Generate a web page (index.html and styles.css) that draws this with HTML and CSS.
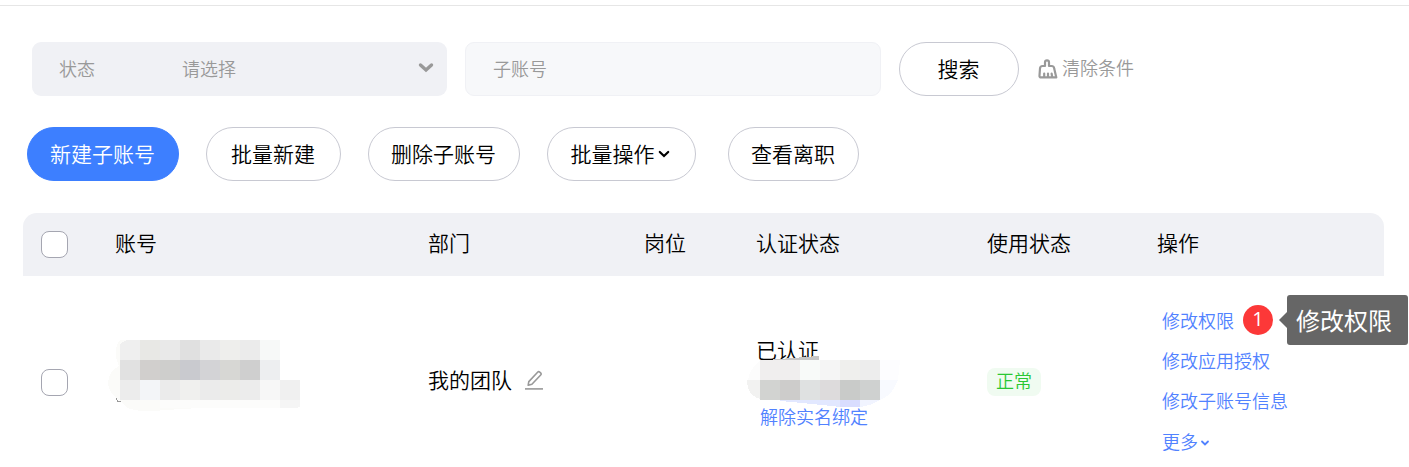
FILE: index.html
```html
<!DOCTYPE html>
<html lang="zh-CN">
<head>
    <meta charset="UTF-8">
    <meta name="viewport" content="width=device-width, initial-scale=1.0">
    <title>子账号</title>
    <link rel="stylesheet" href="styles.css">
</head>
<body>
    <div class="page">
        <div class="filters">
            <div class="select">
                <span class="select-label">状态</span>
                <span class="select-value">请选择</span>
                <svg class="select-arrow" width="16" height="12" viewBox="0 0 16 12"><path d="M2.5 3L8 8L13.5 3" fill="none" stroke="#999" stroke-width="3.4" stroke-linecap="round"/></svg>
            </div>
            <div class="input">子账号</div>
            <button class="btn search">搜索</button>
            <div class="clear">
                <svg width="20" height="20" viewBox="0 0 20 20" fill="none" stroke="#999" stroke-width="2.2" stroke-linejoin="round" stroke-linecap="round">
                    <path d="M7 7V3.4Q7 1.4 9 1.4Q11 1.4 11 3.4V7H13.5Q16 7 16.2 9.5L18.3 18.4H3.2Q1.3 18.4 1.5 16.5L2 9.5Q2.2 7 4.5 7Z"/>
                    <path d="M6.2 14.5V18M10 14.5V18M13.6 14.5L14.2 18"/>
                </svg>
                <span>清除条件</span>
            </div>
        </div>

        <div class="buttons">
            <button class="btn primary">新建子账号</button>
            <button class="btn batch">批量新建</button>
            <button class="btn delete">删除子账号</button>
            <button class="btn more">批量操作<svg width="12" height="10" viewBox="0 0 12 10"><path d="M1.8 3L6 7L10.2 3" fill="none" stroke="#000" stroke-width="2.2" stroke-linecap="round"/></svg></button>
            <button class="btn left">查看离职</button>
        </div>

        <div class="table">
            <div class="row head">
                <div class="check"><span class="checkbox"></span></div>
                <div class="title">账号</div>
                <div class="title">部门</div>
                <div class="title">岗位</div>
                <div class="title">认证状态</div>
                <div class="title">使用状态</div>
                <div class="title">操作</div>
            </div>
            <div class="row body">
                <div class="check"><span class="checkbox"></span></div>
                <div class="account">
                    <svg class="mosaic" width="192" height="72" viewBox="108 340 192 72" shape-rendering="crispEdges">
                        <path d="M120 340Q112 350 119 366Q108 371 108 384Q110 394 119 400L128 408Q140 413 165 410L200 408V340Z" fill="#fbfbf9"/>
                        <path d="M120 345Q123 340 130 340H140V360H120Z" fill="#efefef"/>
                        <path d="M140 340h20v20h-20z" fill="#e8e8e5"/>
                        <path d="M160 340h20v20h-20z" fill="#e9e9e9"/>
                        <path d="M180 340h20v20h-20z" fill="#e0e0e0"/>
                        <path d="M200 340h20v20h-20z" fill="#eaeaea"/>
                        <path d="M220 340h20v20h-20z" fill="#eeeeec"/>
                        <path d="M240 340h20v20h-20z" fill="#ebebeb"/>
                        <path d="M260 340h20v20h-20z" fill="#f7f9f8"/>
                        <path d="M120 360h20v20h-20z" fill="#e1e1e1"/>
                        <path d="M140 360h20v20h-20z" fill="#d1cfcd"/>
                        <path d="M160 360h20v20h-20z" fill="#cececc"/>
                        <path d="M180 360h20v20h-20z" fill="#c9cacf"/>
                        <path d="M200 360h20v20h-20z" fill="#d3d3d6"/>
                        <path d="M220 360h20v20h-20z" fill="#d7d7d4"/>
                        <path d="M240 360h20v20h-20z" fill="#cfcfcf"/>
                        <path d="M260 360h20v20h-20z" fill="#edeef0"/>
                        <path d="M120 380h20v20h-20z" fill="#ececec"/>
                        <path d="M140 380h20v20h-20z" fill="#f3f5f8"/>
                        <path d="M160 380h20v20h-20z" fill="#ebebeb"/>
                        <path d="M180 380h20v20h-20z" fill="#f0f0ee"/>
                        <path d="M200 380h20v20h-20z" fill="#ebebeb"/>
                        <path d="M220 380h20v20h-20z" fill="#ececea"/>
                        <path d="M240 380h20v20h-20z" fill="#ececec"/>
                        <path d="M260 380h20v20h-20z" fill="#f7f7f7"/>
                        <path d="M280 380h20v20h-20z" fill="#f0f0f0"/>
                        <path d="M160 400H280V408H160Z" fill="#fcfcfb"/>
                        <path d="M280 400H300V407L296 408H280Z" fill="#f5f5f5"/>
                        <path d="M116 398h1v2h1v1h3v1h-4v-2h-1z" fill="#999"/>
                    </svg>
                </div>
                <div class="team">
                    <span>我的团队</span>
                    <svg width="20" height="20" viewBox="0 0 20 20" fill="none" stroke="#999" stroke-width="1.6" stroke-linejoin="round">
                        <path d="M4.2 15.2L4.8 11.6L13.6 2.3Q14.6 1.2 15.7 2.1L16.6 2.9Q17.7 4 16.7 5L7.9 14.2Z"/>
                        <path d="M1 18.9H19"/>
                    </svg>
                </div>
                <div></div>
                <div class="auth">
                    <div class="auth-name">已认证</div>
                    <a class="link">解除实名绑定</a>
                    <svg class="auth-mosaic" width="153" height="54" viewBox="747 356 153 54" shape-rendering="crispEdges">
                        <path d="M766 360L819 356V360Z" fill="#c6c6c6"/>
                        <path d="M760 360Q749 370 748 380H760Z" fill="#fcfcfc"/>
                        <path d="M880 360H900L898 380H880Z" fill="#fdfdff"/>
                        <path d="M760 399Q747 395 747 380H760Z" fill="#f2f2f1"/>
                        <path d="M880 380H898Q892 396 880 400Z" fill="#f8faff"/>
                        <path d="M760 360h40v20h-40z" fill="#f0eeee"/>
                        <path d="M800 360h20v20h-20z" fill="#f8faf9"/>
                        <path d="M820 360h20v20h-20z" fill="#f5f5f5"/>
                        <path d="M840 360h20v20h-20z" fill="#efefed"/>
                        <path d="M860 360h20v20h-20z" fill="#ededed"/>
                        <path d="M760 380h20v20h-20z" fill="#d2d3d1"/>
                        <path d="M780 380h20v20h-20z" fill="#cdcccb"/>
                        <path d="M800 380h20v20h-20z" fill="#dfe1e1"/>
                        <path d="M820 380h20v20h-20z" fill="#dddbdc"/>
                        <path d="M840 380h20v20h-20z" fill="#c9cbc9"/>
                        <path d="M860 380h20v20h-20z" fill="#cfd1d0"/>
                        <path d="M780 400H840V407Q815 404 780 401Z" fill="#e2e8ff"/>
                        <path d="M840 400H860V407H840Z" fill="#d9ddfe"/>
                        <path d="M860 400H880Q870 406 860 407Z" fill="#f1f4ff"/>
                    </svg>
                </div>
                <div class="status"><span class="tag">正常</span></div>
                <div class="actions">
                    <a class="link">修改权限</a>
                    <a class="link">修改应用授权</a>
                    <a class="link">修改子账号信息</a>
                    <a class="link">更多<svg width="10" height="8" viewBox="0 0 10 8"><path d="M2 2.5L5 5.5L8 2.5" fill="none" stroke="#5182ff" stroke-width="1.8" stroke-linecap="round"/></svg></a>
                    <span class="badge">1</span>
                    <div class="tooltip">修改权限</div>
                </div>
            </div>
        </div>
    </div>
</body>
</html>
```

FILE: styles.css
```css
* {
    box-sizing: border-box;
}

body {
    margin: 0;
    height: 467px;
    overflow: hidden;
    background-color: #fff;
    color: #000;
    font-family: "Noto Sans CJK SC", sans-serif;
    font-weight: 350;
    font-size: 21px;
    line-height: 30px;
}

.page {
    margin-top: 5px;
    border-top: 1px solid #e6e6e6;
    padding: 36px 25px 0 23px;
}

.filters {
    display: flex;
    align-items: center;
    height: 54px;
    padding-left: 9px;
    font-size: 18px;
    color: #999;
}

.select {
    display: flex;
    align-items: center;
    width: 415px;
    height: 54px;
    padding: 0 13px 2px 27px;
    border-radius: 9px;
    background-color: #f0f1f5;
}

.select-label {
    width: 123px;
}

.select-arrow {
    margin-left: auto;
}

.input {
    width: 416px;
    height: 54px;
    margin-left: 18px;
    padding: 0 27px;
    border: 1px solid #f0f1f5;
    border-radius: 9px;
    background-color: #f7f8fa;
    line-height: 50px;
}

.btn {
    height: 54px;
    padding: 0 1px 2px 0;
    border: 1px solid #c8c9d2;
    border-radius: 27px;
    background-color: #fff;
    color: #000;
    font: inherit;
    font-size: 21px;
    white-space: nowrap;
}

.search {
    width: 120px;
    margin-left: 18px;
}

.clear {
    display: flex;
    align-items: center;
    margin-left: 19px;
    gap: 4px;
}

.clear span {
    margin-top: -5px;
}

.buttons {
    display: flex;
    gap: 27px;
    margin-top: 31px;
    padding-left: 4px;
}

.primary {
    width: 152px;
    border-color: #3d7fff;
    background-color: #3d7fff;
    color: #fff;
}

.batch {
    width: 135px;
}

.delete {
    width: 152px;
}

.more {
    width: 149px;
    padding-right: 3px;
}

.more svg {
    margin-left: 3px;
    vertical-align: 3px;
}

.left {
    width: 131px;
    margin-left: 5px;
}

.table {
    margin-top: 32px;
}

.row {
    display: grid;
    grid-template-columns: 92px 313px 216px 112px 231px 170px 1fr;
    align-items: center;
}

.head {
    height: 63px;
    border-radius: 14px 14px 0 0;
    background-color: #f0f1f5;
}

.title {
    padding-bottom: 5px;
}

.body {
    height: 213px;
}

.check {
    padding-left: 18px;
}

.checkbox {
    display: block;
    width: 27px;
    height: 27px;
    border: 1px solid #a5a6b1;
    border-radius: 8px;
    background-color: #fff;
}

.account {
    height: 213px;
    padding-top: 64px;
}

.mosaic {
    display: block;
    margin-left: -7px;
}

.team {
    display: flex;
    align-items: center;
    gap: 12px;
    margin-top: -5px;
}

.team span {
    margin-top: -3px;
}

.auth {
    position: relative;
    height: 213px;
    padding-top: 58px;
}

.auth .link {
    display: block;
    margin: 37px 0 0 4px;
}

.auth-mosaic {
    position: absolute;
    top: 80px;
    left: -9px;
}

.link {
    color: #5182ff;
    font-size: 18px;
}

.tag {
    display: block;
    width: 54px;
    height: 28px;
    border-radius: 8px;
    background-color: #f0fbf1;
    color: #29c733;
    font-size: 18px;
    line-height: 24px;
    text-align: center;
}

.status {
    margin-top: -1px;
}

.actions {
    position: relative;
    display: flex;
    flex-direction: column;
    gap: 10.4px;
    height: 213px;
    padding: 28.6px 0 0 5px;
}

.actions .link svg {
    margin-left: 2px;
    vertical-align: 2px;
}

.badge {
    position: absolute;
    top: 29px;
    left: 86px;
    width: 30px;
    height: 30px;
    border-radius: 50%;
    background-color: #fc3838;
    color: #fff;
    font-family: "Open Sans", sans-serif;
    font-size: 20px;
    font-weight: 400;
    line-height: 28px;
    text-align: center;
}

.tooltip {
    position: absolute;
    top: 19px;
    left: 130px;
    width: 121px;
    height: 50px;
    padding-left: 9px;
    border-radius: 3px;
    background-color: #666;
    color: #fff;
    font-size: 24px;
    font-weight: 400;
    line-height: 50px;
}

.tooltip::before {
    content: "";
    position: absolute;
    top: 17px;
    left: -8px;
    border: 8px solid transparent;
    border-left: 0;
    border-right-color: #666;
}
```
